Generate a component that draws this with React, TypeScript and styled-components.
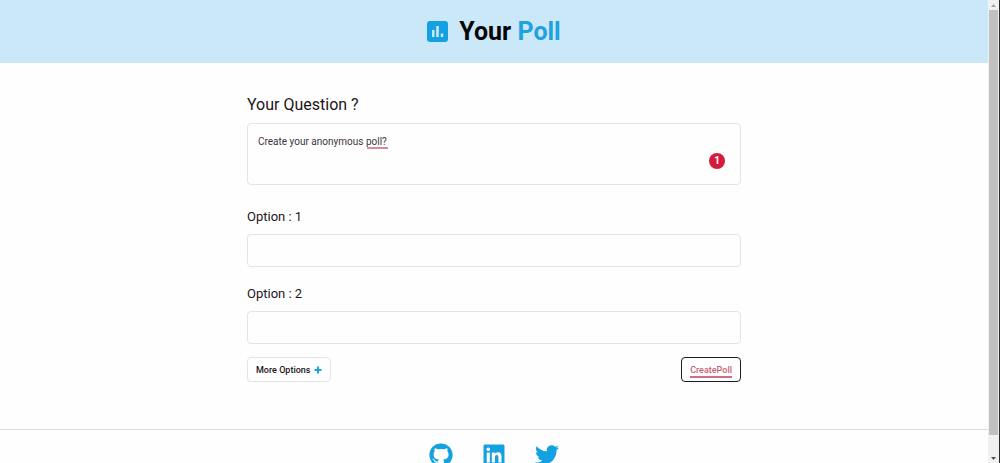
import React, { useState } from "react";
import styled, { createGlobalStyle } from "styled-components";
import { FaGithub, FaLinkedin, FaTwitter } from "react-icons/fa";

const GlobalStyle = createGlobalStyle`
  *, *::before, *::after { box-sizing: border-box; }
  body {
    margin: 0;
    background: #fefefe;
    color: #1d1519;
    font-family: Roboto, "Liberation Sans", sans-serif;
  }
`;

const Window = styled.div`
  display: flex;
  height: 100vh;
  overflow: hidden;
`;

const Page = styled.div`
  flex: 1;
  min-width: 0;
  overflow: hidden;
`;

const Header = styled.header`
  display: flex;
  align-items: center;
  justify-content: center;
  gap: 11px;
  padding: 15px 0;
  background: #cbe8f8;
  color: #14a1e2;
`;

const Title = styled.h1`
  margin: 0;
  padding-top: 1px;
  font-size: 25px;
  line-height: 32px;
  font-weight: 700;
  color: #050608;
`;

const Accent = styled.span`
  color: #1fa3de;
`;

const Form = styled.form`
  display: flex;
  flex-direction: column;
  width: 50%;
  margin: 0 auto;
  padding: 32px 0 47px;
`;

const Field = styled.div`
  display: flex;
  flex-direction: column;
`;

const OptionList = styled.div`
  display: flex;
  flex-direction: column;
  gap: 19px;
  margin: 24px 0 13px;
`;

const Label = styled.label<{ $large?: boolean }>`
  font-size: ${(p) => (p.$large ? 16 : 13)}px;
  line-height: ${(p) => (p.$large ? 20 : 16)}px;
  margin-bottom: ${(p) => (p.$large ? 8 : 9)}px;
`;

const QuestionBox = styled.div`
  position: relative;
  display: flex;
`;

const Question = styled.textarea`
  flex: 1;
  height: 62px;
  padding: 10px;
  border: 1px solid #e3e4e6;
  border-radius: 4px;
  background: #fefefe;
  color: #3c363a;
  font: 400 10px/16px Roboto, "Liberation Sans", sans-serif;
  resize: none;
  outline: none;
`;

const SpellingMark = styled.span`
  position: absolute;
  left: 120px;
  top: 24px;
  width: 21px;
  height: 2px;
  background: #d98a9b;
`;

const ErrorCount = styled.span`
  position: absolute;
  right: 16px;
  bottom: 16px;
  width: 16px;
  height: 16px;
  border-radius: 50%;
  background: #d51c3f;
  color: #fff;
  font-size: 10px;
  line-height: 16px;
  font-weight: 700;
  text-align: center;
`;

const OptionInput = styled.input`
  width: 100%;
  height: 33px;
  padding: 0 10px;
  border: 1px solid #e3e4e6;
  border-radius: 4px;
  background: #fefefe;
  font: 400 10px Roboto, "Liberation Sans", sans-serif;
  outline: none;
`;

const Actions = styled.div`
  display: flex;
  justify-content: space-between;
`;

const Button = styled.button<{ $primary?: boolean }>`
  display: flex;
  align-items: center;
  gap: 4px;
  height: 25px;
  padding: 0 8px;
  border: 1px solid ${(p) => (p.$primary ? "#1c1c20" : "#e3e4e6")};
  border-radius: 4px;
  background: #fefefe;
  color: ${(p) => (p.$primary ? "#cb5f78" : "#1d1519")};
  font: 500 9px/12px Roboto, "Liberation Sans", sans-serif;
  cursor: pointer;

  svg {
    color: #1fa3de;
  }
`;

const Underlined = styled.span`
  padding-top: 2px;
  border-bottom: 2px solid #cf6f86;
`;

const Footer = styled.footer`
  display: flex;
  justify-content: center;
  gap: 29px;
  padding: 13px 0 24px;
  border-top: 1px solid #dcdddf;
`;

const SocialLink = styled.a`
  display: flex;
  color: #14a1e2;
`;

const Scrollbar = styled.div`
  display: flex;
  flex-direction: column;
  align-items: center;
  justify-content: space-between;
  width: 12px;
  border-right: 1px solid #2b2b2b;
  background: #f1f1f1;
`;

const Arrow = styled.span<{ $down?: boolean }>`
  display: flex;
  align-items: center;
  justify-content: center;
  height: 10px;
  color: ${(p) => (p.$down ? "#505050" : "#a3a3a3")};

  svg {
    transform: ${(p) => (p.$down ? "rotate(180deg)" : "none")};
  }
`;

const Track = styled.div`
  flex: 1;
  width: 9px;
`;

const Thumb = styled.div`
  height: 96%;
  background: #c1c1c1;
`;

const ArrowShape = () => (
  <svg width="5" height="3" viewBox="0 0 5 3" fill="currentColor">
    <path d="M2.5 0 5 3H0z" />
  </svg>
);

const PlusIcon = () => (
  <svg width="8" height="8" viewBox="0 0 8 8" fill="currentColor" aria-hidden="true">
    <path d="M3 .5h2V3h2.5v2H5v2.5H3V5H.5V3H3z" />
  </svg>
);

const PollIcon = () => (
  <svg width="21" height="21" viewBox="0 0 21 21" aria-hidden="true">
    <rect width="21" height="21" rx="3" fill="currentColor" />
    <path d="M5 9h2.5v7H5zM9.2 5h2.6v11H9.2zM13.8 12.5h2.4V16h-2.4z" fill="#cbe8f8" />
  </svg>
);

const socials = [
  { name: "GitHub", Icon: FaGithub },
  { name: "LinkedIn", Icon: FaLinkedin },
  { name: "Twitter", Icon: FaTwitter },
];

export default function App() {
  const [question, setQuestion] = useState("Create your anonymous poll?");
  const [options, setOptions] = useState(["", ""]);

  return (
    <Window>
      <GlobalStyle />
      <Page>
        <Header>
          <PollIcon />
          <Title>
            Your <Accent>Poll</Accent>
          </Title>
        </Header>
        <Form onSubmit={(e) => e.preventDefault()}>
          <Field>
            <Label htmlFor="question" $large>
              Your Question ?
            </Label>
            <QuestionBox>
              <Question
                id="question"
                spellCheck={false}
                value={question}
                onChange={(e) => setQuestion(e.target.value)}
              />
              <SpellingMark />
              <ErrorCount>1</ErrorCount>
            </QuestionBox>
          </Field>
          <OptionList>
            {options.map((value, i) => (
              <Field key={i}>
                <Label htmlFor={`option-${i}`}>{`Option : ${i + 1}`}</Label>
                <OptionInput
                  id={`option-${i}`}
                  value={value}
                  onChange={(e) =>
                    setOptions(options.map((o, n) => (n === i ? e.target.value : o)))
                  }
                />
              </Field>
            ))}
          </OptionList>
          <Actions>
            <Button type="button" onClick={() => setOptions([...options, ""])}>
              More Options <PlusIcon />
            </Button>
            <Button type="submit" $primary>
              <Underlined>CreatePoll</Underlined>
            </Button>
          </Actions>
        </Form>
        <Footer>
          {socials.map(({ name, Icon }) => (
            <SocialLink key={name} href="#" aria-label={name}>
              <Icon size={24} />
            </SocialLink>
          ))}
        </Footer>
      </Page>
      <Scrollbar aria-hidden="true">
        <Arrow>
          <ArrowShape />
        </Arrow>
        <Track>
          <Thumb />
        </Track>
        <Arrow $down>
          <ArrowShape />
        </Arrow>
      </Scrollbar>
    </Window>
  );
}
